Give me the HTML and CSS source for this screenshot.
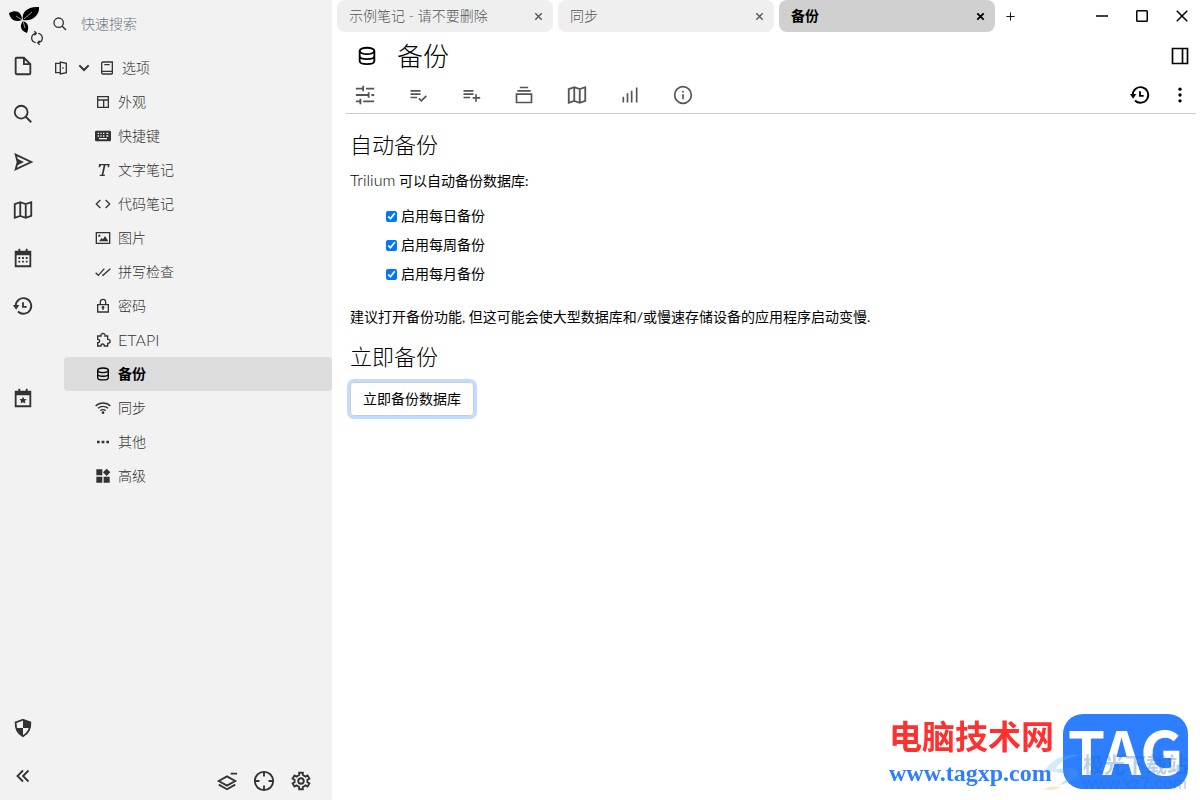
FILE: index.html
```html
<!DOCTYPE html>
<html lang="zh-CN">
<head>
  <meta charset="UTF-8">
  <meta name="viewport" content="width=device-width, initial-scale=1">
  <title>备份 - Trilium Notes</title>
  <link rel="stylesheet" href="styles.css">
</head>
<body>
  <!-- icon sprite -->
  <svg class="sprite" aria-hidden="true">
    <symbol id="i-file" viewBox="0 0 24 24"><path d="M13 3H5a1 1 0 0 0-1 1v16a1 1 0 0 0 1 1h14a1 1 0 0 0 1-1V10zM13 3v7h7"/></symbol>
    <symbol id="i-search" viewBox="0 0 24 24"><circle cx="10" cy="10" r="7"/><path d="m15 15 6 6"/></symbol>
    <symbol id="i-send" viewBox="0 0 24 24"><path d="M4 4l17 8-17 8 2-7.5v-1z"/><path class="fill" d="M5 8l8 4-8 4 1-4z"/></symbol>
    <symbol id="i-map" viewBox="0 0 24 24"><path d="M3 5.5 9 3.5l6 2 6-2v15l-6 2-6-2-6 2zM9 3.5v15M15 5.5v15"/></symbol>
    <symbol id="i-calendar" viewBox="0 0 24 24"><path d="M4 5h16v16H4zM4 7h16M8 2v4M16 2v4"/><path class="fill" d="M4 5h16v4H4zM7 11h2v2H7zM11 11h2v2h-2zM15 11h2v2h-2zM7 15h2v2H7zM11 15h2v2h-2zM15 15h2v2h-2z"/></symbol>
    <symbol id="i-calendar-star" viewBox="0 0 24 24"><path d="M4 5h16v16H4zM4 7h16M8 2v4M16 2v4"/><path class="fill" d="M4 5h16v4H4zM12 10.500l1.200 2.500 2.800.4-2 1.900.5 2.700-2.500-1.300L9.500 18l.5-2.700-2-1.900 2.800-.4z"/></symbol>
    <symbol id="i-history" viewBox="0 0 24 24"><path d="M4 12a8.500 8.500 0 1 1 2.500 6M12 8v5h4"/><path class="fill" d="M1 11h7l-3.500 5z"/></symbol>
    <symbol id="i-shield" viewBox="0 0 24 24"><path d="m12 3 8 3c.3 6-1 11-8 15-7-4-8.300-9-8-15z"/><path class="fill" d="M12 3l8 3v6h-8zM4 12h8v9c-5-2.500-7-5.500-8-9z"/></symbol>
    <symbol id="i-collapse" viewBox="0 0 24 24"><path d="m12 6-6 6 6 6M18 6l-6 6 6 6"/></symbol>
    <symbol id="i-sync" viewBox="0 0 24 24"><path d="M10 19c-8-2-8-12 0-14M14 5c8 2 8 12 0 14M8 2l3 3-3 3M16 16l-3 3 3 3"/></symbol>
    <symbol id="i-door" viewBox="0 0 24 24"><path d="M11 5H4v14h7M11 3v18l9-2V5z"/><path class="fill" d="M14 11h2v2h-2z"/></symbol>
    <symbol id="i-down" viewBox="0 0 24 24"><path d="m5 8 7 7 7-7"/></symbol>
    <symbol id="i-book" viewBox="0 0 24 24"><path d="M20 17V3H6a2 2 0 0 0-2 2v14a2 2 0 0 0 2 2h14M20 17H6a2 2 0 0 0 0 4M20 17v4M8 7h8"/></symbol>
    <symbol id="i-layout" viewBox="0 0 24 24"><path d="M4 4h16v16H4zM4 9h16M13 9v11"/></symbol>
    <symbol id="i-keyboard" viewBox="0 0 24 24"><path class="fill" fill-rule="evenodd" d="M2 4h20a2 2 0 0 1 2 2v12a2 2 0 0 1-2 2H2a2 2 0 0 1-2-2V6a2 2 0 0 1 2-2zM4 7v2h2V7zm4 0v2h2V7zm4 0v2h2V7zm5 0v2h3V7zM4 11v2h2v-2zm4 0v2h2v-2zm4 0v2h2v-2zm5 0v2h3v-2zM6 15v2h12v-2z"/></symbol>
    <symbol id="i-text" viewBox="0 0 24 24"><path class="fill" d="M6 3h16l-1 5h-2l.2-3h-3.500L12.500 19H15l-.4 2H7l.4-2H10l3-14H9L7.500 8h-2z"/></symbol>
    <symbol id="i-code" viewBox="0 0 24 24"><path d="m8 6-6 6 6 6M16 6l6 6-6 6"/></symbol>
    <symbol id="i-image" viewBox="0 0 24 24"><path d="M2 4h20v16H2z"/><path class="fill" d="m6 17 4-5 2 2 3-5 5 8zM5 7h3v3H5z"/></symbol>
    <symbol id="i-check-double" viewBox="0 0 24 24"><path d="m1 13 4 4L14 7M11 16l1 1L23 7"/></symbol>
    <symbol id="i-lock" viewBox="0 0 24 24"><path d="M4 10h16v11H4zM8 10V6a4 4 0 0 1 8 0v4M12 14v4"/><circle class="fill" cx="12" cy="14" r="2"/></symbol>
    <symbol id="i-extension" viewBox="0 0 24 24"><path d="M4 6h5c-1-5 7-5 6 0h4v5c5 0 5 6 0 6v4h-5c0-4-5-4-5 0H4v-5c4 0 4-5 0-5z"/></symbol>
    <symbol id="i-data" viewBox="0 0 24 24"><ellipse cx="12" cy="6.500" rx="8" ry="3.500"/><path d="M4 6.500v11c0 4.500 16 4.500 16 0v-11M4 12c0 4.500 16 4.500 16 0"/></symbol>
    <symbol id="i-wifi" viewBox="0 0 24 24"><path d="M1 9c6-6 16-6 22 0M4.500 12.500c4-4 11-4 15 0M8 16c2-2 6-2 8 0"/><circle class="fill" cx="12" cy="19" r="2"/></symbol>
    <symbol id="i-dots" viewBox="0 0 24 24"><path class="fill" d="M3 10h4v4H3zM10 10h4v4h-4zM17 10h4v4h-4z"/></symbol>
    <symbol id="i-dots-v" viewBox="0 0 24 24"><circle class="fill" cx="12" cy="5" r="2"/><circle class="fill" cx="12" cy="12" r="2"/><circle class="fill" cx="12" cy="19" r="2"/></symbol>
    <symbol id="i-widgets" viewBox="0 0 24 24"><path class="fill" d="M2 2h9v9H2zM2 13h9v9H2zM13 13h9v9h-9zM17.500 1l5.500 5.500-5.500 5.500L12 6.500z"/></symbol>
    <symbol id="i-layer-minus" viewBox="0 0 24 24"><path d="m12 7 9 5-9 5-9-5zM3 16l9 5 9-5M16 4h7"/></symbol>
    <symbol id="i-crosshair" viewBox="0 0 24 24"><circle cx="12" cy="12" r="10"/><path d="M12 2v5M12 17v5M2 12h5M17 12h5"/></symbol>
    <symbol id="i-cog" viewBox="0 0 24 24"><circle cx="12" cy="12" r="3"/><path d="M10 3h4v2.500l3 1.700 2.200-1.300 2 3.500L19 10.700v2.600l2.200 1.300-2 3.500-2.200-1.300-3 1.700V21h-4v-2.500l-3-1.700-2.200 1.300-2-3.500L5 13.300v-2.600L2.800 9.400l2-3.500L7 7.200l3-1.700z"/></symbol>
    <symbol id="i-slider" viewBox="0 0 24 24"><path d="M2 5h8M10 2v6M13 5h9M2 12h13M16 9v6M19 12h3M2 19h4M7 16v6M10 19h12"/></symbol>
    <symbol id="i-list-check" viewBox="0 0 24 24"><path d="M3 7h12M3 11h12M3 15h8M13 16l3 3 6-6"/></symbol>
    <symbol id="i-list-plus" viewBox="0 0 24 24"><path d="M3 7h12M3 11h12M3 15h8M18 11v9M14 15.500h9"/></symbol>
    <symbol id="i-collection" viewBox="0 0 24 24"><path d="M3 11h18v10H3zM4 7h16M7 3h10"/></symbol>
    <symbol id="i-bars" viewBox="0 0 24 24"><path d="M4 14v7M9 10v11M14 7v14M20 3v18"/></symbol>
    <symbol id="i-info" viewBox="0 0 24 24"><circle cx="12" cy="12" r="10"/><path d="M12 11v6M12 7v2"/></symbol>
    <symbol id="i-panel" viewBox="0 0 24 24"><path d="M3 3h18v18H3zM15 3v18"/></symbol>
    <symbol id="i-close" viewBox="0 0 24 24"><path d="m5 5 14 14M19 5 5 19"/></symbol>
    <symbol id="i-plus" viewBox="0 0 24 24"><path d="M12 3v18M3 12h18"/></symbol>
    <symbol id="i-min" viewBox="0 0 24 24"><path d="M4 12h16"/></symbol>
    <symbol id="i-max" viewBox="0 0 24 24"><rect x="5" y="5" width="14" height="14" rx="1"/></symbol>
    <symbol id="i-logo" viewBox="0 0 32 28">
      <path class="fill" d="M14 14C7 17 2 13 1 7c7-4 13-1 13 7zM15 14C13 6 20 0 31 1c1 8-7 15-16 13zM15 15c6 2 6 7 4 12-6-2-8-7-4-12z"/>
      <path class="vein" d="M14 14 8 10M16 13l8-7M15 15l2 7"/>
    </symbol>
  </svg>

  <div class="app">
    <nav class="launcher">
      <div class="logo">
        <svg class="logo-mark"><use href="#i-logo"/></svg>
        <svg class="icon icon-sm logo-sync"><use href="#i-sync"/></svg>
      </div>
      <button class="launch" aria-label="新建笔记"><svg class="icon"><use href="#i-file"/></svg></button>
      <button class="launch" aria-label="搜索"><svg class="icon"><use href="#i-search"/></svg></button>
      <button class="launch" aria-label="跳转"><svg class="icon"><use href="#i-send"/></svg></button>
      <button class="launch" aria-label="笔记地图"><svg class="icon"><use href="#i-map"/></svg></button>
      <button class="launch" aria-label="日历"><svg class="icon"><use href="#i-calendar"/></svg></button>
      <button class="launch" aria-label="最近修改"><svg class="icon"><use href="#i-history"/></svg></button>
      <div class="launch-gap"></div>
      <button class="launch" aria-label="今日笔记"><svg class="icon"><use href="#i-calendar-star"/></svg></button>
      <div class="grow"></div>
      <button class="launch" aria-label="受保护会话"><svg class="icon"><use href="#i-shield"/></svg></button>
      <button class="launch" aria-label="隐藏侧栏"><svg class="icon"><use href="#i-collapse"/></svg></button>
    </nav>

    <aside class="left-pane">
      <div class="quick-search">
        <svg class="icon icon-sm"><use href="#i-search"/></svg>
        <input type="text" class="quick-input" placeholder="快速搜索" aria-label="快速搜索">
      </div>
      <div class="tree">
        <a href="#options" class="tree-root">
          <svg class="icon icon-sm"><use href="#i-door"/></svg>
          <svg class="icon icon-sm bold"><use href="#i-down"/></svg>
          <svg class="icon icon-sm"><use href="#i-book"/></svg>
          <span>选项</span>
        </a>
        <a href="#appearance" class="tree-item"><svg class="icon icon-sm"><use href="#i-layout"/></svg>外观</a>
        <a href="#shortcuts" class="tree-item"><svg class="icon icon-sm"><use href="#i-keyboard"/></svg>快捷键</a>
        <a href="#text" class="tree-item"><svg class="icon icon-sm"><use href="#i-text"/></svg>文字笔记</a>
        <a href="#code" class="tree-item"><svg class="icon icon-sm"><use href="#i-code"/></svg>代码笔记</a>
        <a href="#images" class="tree-item"><svg class="icon icon-sm"><use href="#i-image"/></svg>图片</a>
        <a href="#spellcheck" class="tree-item"><svg class="icon icon-sm"><use href="#i-check-double"/></svg>拼写检查</a>
        <a href="#password" class="tree-item"><svg class="icon icon-sm"><use href="#i-lock"/></svg>密码</a>
        <a href="#etapi" class="tree-item"><svg class="icon icon-sm"><use href="#i-extension"/></svg><span class="latin">ETAPI</span></a>
        <a href="#backup" class="tree-item active"><svg class="icon icon-sm"><use href="#i-data"/></svg>备份</a>
        <a href="#sync" class="tree-item"><svg class="icon icon-sm"><use href="#i-wifi"/></svg>同步</a>
        <a href="#other" class="tree-item"><svg class="icon icon-sm"><use href="#i-dots"/></svg>其他</a>
        <a href="#advanced" class="tree-item"><svg class="icon icon-sm"><use href="#i-widgets"/></svg>高级</a>
      </div>
      <div class="tree-actions">
        <button class="tree-action" aria-label="折叠"><svg class="icon"><use href="#i-layer-minus"/></svg></button>
        <button class="tree-action" aria-label="定位"><svg class="icon"><use href="#i-crosshair"/></svg></button>
        <button class="tree-action" aria-label="设置"><svg class="icon"><use href="#i-cog"/></svg></button>
      </div>
    </aside>

    <main class="main">
      <header class="tab-row">
        <div class="tab"><span class="tab-title">示例笔记 - 请不要删除</span><button class="tab-close" aria-label="关闭"><svg class="icon icon-xs bold"><use href="#i-close"/></svg></button></div>
        <div class="tab"><span class="tab-title">同步</span><button class="tab-close" aria-label="关闭"><svg class="icon icon-xs bold"><use href="#i-close"/></svg></button></div>
        <div class="tab active"><span class="tab-title">备份</span><button class="tab-close" aria-label="关闭"><svg class="icon icon-xs bolder"><use href="#i-close"/></svg></button></div>
        <button class="new-tab" aria-label="新标签页"><svg class="icon icon-xs"><use href="#i-plus"/></svg></button>
        <div class="window-buttons">
          <button class="win" aria-label="最小化"><svg class="icon icon-win"><use href="#i-min"/></svg></button>
          <button class="win" aria-label="最大化"><svg class="icon icon-win"><use href="#i-max"/></svg></button>
          <button class="win" aria-label="关闭窗口"><svg class="icon icon-win"><use href="#i-close"/></svg></button>
        </div>
      </header>

      <div class="title-row">
        <button class="note-icon" aria-label="更改图标"><svg class="icon"><use href="#i-data"/></svg></button>
        <h1 class="note-title">备份</h1>
        <button class="win" aria-label="右侧面板"><svg class="icon icon-md"><use href="#i-panel"/></svg></button>
      </div>

      <div class="ribbon">
        <button class="ribbon-tab" aria-label="基本属性"><svg class="icon"><use href="#i-slider"/></svg></button>
        <button class="ribbon-tab" aria-label="自有属性"><svg class="icon icon-md"><use href="#i-list-check"/></svg></button>
        <button class="ribbon-tab" aria-label="继承属性"><svg class="icon icon-md"><use href="#i-list-plus"/></svg></button>
        <button class="ribbon-tab" aria-label="笔记路径"><svg class="icon icon-md"><use href="#i-collection"/></svg></button>
        <button class="ribbon-tab" aria-label="笔记地图"><svg class="icon"><use href="#i-map"/></svg></button>
        <button class="ribbon-tab" aria-label="相似笔记"><svg class="icon icon-md"><use href="#i-bars"/></svg></button>
        <button class="ribbon-tab" aria-label="笔记信息"><svg class="icon icon-md"><use href="#i-info"/></svg></button>
        <div class="ribbon-actions">
          <button class="win" aria-label="修订历史"><svg class="icon"><use href="#i-history"/></svg></button>
          <button class="win" aria-label="更多"><svg class="icon icon-md"><use href="#i-dots-v"/></svg></button>
        </div>
      </div>

      <section class="content">
        <h2 class="section-title">自动备份</h2>
        <p class="text"><span class="latin">Trilium</span> 可以自动备份数据库:</p>
        <ul class="options">
          <li><label><input type="checkbox" checked>启用每日备份</label></li>
          <li><label><input type="checkbox" checked>启用每周备份</label></li>
          <li><label><input type="checkbox" checked>启用每月备份</label></li>
        </ul>
        <p class="text">建议打开备份功能, 但这可能会使大型数据库和/或慢速存储设备的应用程序启动变慢.</p>
        <h2 class="section-title">立即备份</h2>
        <button class="backup-button">立即备份数据库</button>
      </section>
    </main>
  </div>

  <div class="watermark">
    <div class="wm-text">
      <div class="wm-name">电脑技术网</div>
      <div class="wm-url">www.tagxp.com</div>
    </div>
    <div class="wm-tag">TAG</div>
    <div class="wm-ghost">
      <svg class="wm-swirl" viewBox="0 0 46 42">
        <path d="M4 20C12 6 26 1 44 2 26 6 18 12 16 18c8-2 18 0 20 6-10-4-22-2-32-4z" fill="#6fb7f5"/>
        <path d="M18 22c12-2 16 6 0 14 20-4 28-14 18-19-6-2-14 0-18 5z" fill="#4f9ae0"/>
        <path d="M2 40c8-4 14-4 20-2-6 3-12 4-20 2z" fill="#e8b96a"/>
      </svg>
      <div>
        <div class="wm-ghost-name">极光下载站</div>
        <div class="wm-ghost-url">www.xz7.com</div>
      </div>
    </div>
  </div>
</body>
</html>
```

FILE: styles.css
```css
* {
  box-sizing: border-box;
}

body {
  margin: 0;
  font-family: Lato, "Noto Sans CJK SC", sans-serif;
  font-size: 14px;
  font-weight: 300;
  line-height: 20px;
  color: #000;
  background: #fff;
}

button {
  display: flex;
  align-items: center;
  justify-content: center;
  padding: 0;
  border: none;
  background: none;
  color: inherit;
  font: inherit;
  cursor: pointer;
}

a {
  color: inherit;
  text-decoration: none;
}

.latin {
  font-size: 16px;
  font-weight: 300;
}

/* Icons */
.sprite {
  display: none;
}

.icon {
  flex: none;
  width: 22px;
  height: 22px;
  fill: none;
  stroke: currentColor;
  stroke-width: 2;
}

.icon-md {
  width: 20px;
  height: 20px;
}

.icon-win {
  width: 18px;
  height: 18px;
}

.icon-sm {
  width: 16px;
  height: 16px;
}

.icon-xs {
  width: 11px;
  height: 11px;
}

.bold {
  stroke-width: 3;
}

.bolder {
  stroke-width: 4;
}

.fill {
  fill: currentColor;
  stroke: none;
}

.vein {
  stroke: #999;
  stroke-width: 1;
}

.grow {
  flex: 1;
}

.app {
  display: flex;
  min-height: 100vh;
}

/* Launcher */
.launcher {
  display: flex;
  flex-direction: column;
  width: 48px;
  background: #f2f2f2;
  color: #333;
}

.logo {
  position: relative;
  height: 42px;
  padding: 6px 8px;
  color: #000;
}

.logo-mark {
  display: block;
  width: 32px;
  height: 28px;
}

.logo-sync {
  position: absolute;
  right: 3px;
  bottom: -4px;
  color: #333;
}

.launch {
  height: 48px;
  padding-right: 2px;
}

.launch-gap {
  height: 44px;
}

/* Note tree */
.left-pane {
  display: flex;
  flex-direction: column;
  width: 284px;
  background: #f2f2f2;
  color: #333;
}

.quick-search {
  display: flex;
  align-items: center;
  gap: 13px;
  height: 51px;
  padding: 0 8px 4px 4px;
}

.quick-input {
  flex: 1;
  min-width: 0;
  padding: 0;
  border: none;
  outline: none;
  background: none;
  font: inherit;
}

.quick-input::placeholder {
  color: #6c757d;
}

.tree {
  flex: 1;
}

.tree-root,
.tree-item {
  display: flex;
  align-items: center;
  gap: 7px;
  height: 34px;
}

.tree-root {
  padding-left: 5px;
}

.tree-item {
  margin-left: 16px;
  padding-left: 31px;
}

.tree-item.active {
  background: #dcdcdc;
  border-radius: 4px;
  color: #000;
  font-weight: 700;
}

.tree-actions {
  display: flex;
  justify-content: flex-end;
  gap: 15px;
  padding: 0 20px 8px 0;
}

/* Main area */
.main {
  display: flex;
  flex: 1;
  flex-direction: column;
  min-width: 0;
}

.tab-row {
  display: flex;
  gap: 5px;
  padding-left: 5px;
}

.tab {
  display: flex;
  align-items: center;
  flex: 0 1 216px;
  height: 32px;
  padding: 0 9px 0 12px;
  border-radius: 8px;
  background: #efefef;
  color: #555;
}

.tab-title {
  flex: 1;
  overflow: hidden;
  white-space: nowrap;
}

.tab.active {
  background: #d0d0d0;
  color: #000;
  font-weight: 700;
}

.new-tab {
  width: 20px;
  height: 32px;
}

.window-buttons {
  display: flex;
  gap: 4px;
  height: 32px;
  margin-left: auto;
}

.win {
  width: 36px;
}

.title-row {
  display: flex;
  align-items: center;
  height: 48px;
  padding: 0 2px 0 24px;
}

.note-icon {
  width: 22px;
}

.note-title {
  flex: 1;
  margin: 0 0 0 19px;
  font-size: 26px;
  font-weight: 300;
  line-height: 36px;
}

.ribbon {
  display: flex;
  gap: 31px;
  height: 34px;
  margin: 0 4px 0 14px;
  padding-left: 8px;
  border-bottom: 1px solid #ccc;
}

.ribbon-tab {
  width: 22px;
  height: 30px;
  color: #555;
}

.ribbon-actions {
  display: flex;
  gap: 4px;
  height: 30px;
  margin: 0 -2px 0 auto;
}

.content {
  padding: 16px 18px;
  font-weight: 400;
}

.section-title {
  margin: 0 0 10px;
  font-size: 22px;
  font-weight: 300;
  line-height: 30px;
}

.text {
  margin: 0 0 15px;
}

.options {
  margin: 0 0 14px;
  padding-left: 36px;
  list-style: none;
}

.options li {
  height: 29px;
}

.options label {
  display: inline-flex;
  align-items: center;
  gap: 4px;
}

.options input {
  width: 11px;
  height: 11px;
  margin: 0;
  accent-color: #0075ff;
}

.backup-button {
  height: 34px;
  padding: 0 12px;
  border: 1px solid #ccc;
  border-radius: 4px;
  box-shadow: 0 0 0 3px #bfdeff;
}

/* Watermark over the page */
.watermark {
  position: fixed;
  right: 12px;
  bottom: 11px;
  display: flex;
  gap: 9px;
}

.wm-name {
  color: #ff3030;
  font-size: 33px;
  font-weight: 700;
  line-height: 44px;
}

.wm-url {
  color: #2d7fff;
  font-family: "Liberation Serif", serif;
  font-size: 24px;
  font-weight: 700;
  line-height: 30px;
}

.wm-tag {
  width: 125px;
  height: 75px;
  border-radius: 20px;
  background: #2d7fff;
  color: #fff;
  font-family: "Noto Sans CJK SC", sans-serif;
  font-size: 60px;
  font-weight: 700;
  line-height: 70px;
  text-align: center;
}

.wm-ghost {
  position: absolute;
  right: 0;
  bottom: -3px;
  display: flex;
  align-items: center;
  opacity: 0.3;
  color: #1c62c8;
}

.wm-swirl {
  width: 42px;
  height: 40px;
}

.wm-ghost-name {
  font-size: 21px;
  font-weight: 700;
  line-height: 24px;
}

.wm-ghost-url {
  font-family: "Liberation Sans", sans-serif;
  font-size: 17px;
  font-weight: 400;
  line-height: 16px;
}
```
